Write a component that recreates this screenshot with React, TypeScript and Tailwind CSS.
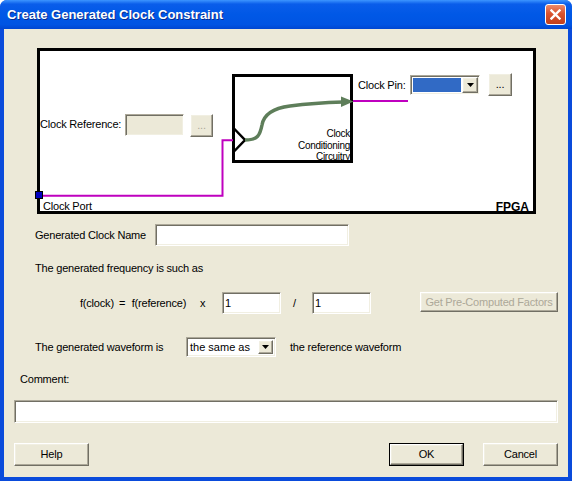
import React from 'react';

// XP-ish 3D borders
const sunken =
  'border border-t-[#ACA899] border-l-[#ACA899] border-b-white border-r-white shadow-[inset_1px_1px_0_#716F64,inset_-1px_-1px_0_#F1EFE2]';
const raised =
  'border border-t-white border-l-white border-b-[#716F64] border-r-[#716F64] shadow-[inset_-1px_-1px_0_#ACA899,inset_1px_1px_0_#F1EFE2] bg-[#ECE9D8]';

const DropArrow = () => (
  <svg width="7" height="4" viewBox="0 0 7 4">
    <polygon points="0,0 7,0 3.5,4" fill="#000" />
  </svg>
);

const Diagram = () => (
  <div className="ml-[33px] mt-[19px] w-[499px] h-[166px] border-[3px] border-black bg-white relative">
    {/* clock conditioning block */}
    <div className="absolute left-[192px] top-[23px] w-[121px] h-[89px] border-[3px] border-black">
      <div className="absolute right-0 top-[51px] text-right text-[10px] leading-[11.5px] tracking-[-0.3px]">
        Clock
        <br />
        Conditioning
        <br />
        Circuitry
      </div>
    </div>

    <svg className="absolute inset-0 overflow-visible" width="493" height="160">
      <polyline
        points="3,144.8 182.5,144.8 182.5,89.2 193,89.2"
        fill="none"
        stroke="#BF00BF"
        strokeWidth="2"
      />
      <line x1="313" y1="50" x2="368" y2="50" stroke="#BF00BF" strokeWidth="2" />
      <polyline points="193,76.5 205,89 193,101.5" fill="none" stroke="#000" strokeWidth="2.5" />
      <path
        d="M205 89 C218 89 220 84 222 74 C224 62 235 57 250 55 C265 53 285 51.5 303 51"
        fill="none"
        stroke="#5E7E5A"
        strokeWidth="3.5"
      />
      <polygon points="301,45.5 313.5,50.5 301,56" fill="#5E7E5A" />
    </svg>

    {/* clock port */}
    <div className="absolute left-[-5px] top-[140px] w-[8px] h-[8px] bg-[#0000C0] border border-black" />
    <span className="absolute left-[3px] top-[148px] leading-[14px]">Clock Port</span>

    {/* clock reference */}
    <span className="absolute left-0 top-[66px] leading-[14px]">Clock Reference:</span>
    <div className={`absolute left-[85px] top-[63px] w-[59px] h-[22px] bg-[#ECE9D8] ${sunken}`} />
    <div
      className={`absolute left-[150px] top-[63px] w-[23px] h-[23px] flex items-center justify-center text-[#ACA899] ${raised}`}
    >
      ...
    </div>

    {/* clock pin */}
    <span className="absolute left-[318px] top-[27px] leading-[14px]">Clock Pin:</span>
    <div className={`absolute left-[370px] top-[24px] w-[70px] h-[20px] bg-white p-[1px] flex ${sunken}`}>
      <div className="flex-1 m-[1px] bg-[#316AC5]" />
      <div className={`w-[16px] flex items-center justify-center ${raised}`}>
        <DropArrow />
      </div>
    </div>
    <div
      className={`absolute left-[448px] top-[22px] w-[24px] h-[23px] flex items-center justify-center ${raised}`}
    >
      ...
    </div>

    <span className="absolute right-[4px] top-[149px] text-[12px] font-bold leading-[14px] tracking-normal">
      FPGA
    </span>
  </div>
);

export default function App() {
  return (
    <div className="w-[572px] h-[481px] bg-[#0A4BDB] rounded-t-[7px] flex flex-col overflow-hidden font-['Liberation_Sans',Arial,sans-serif] text-[11px] text-black tracking-[-0.2px]">
      {/* title bar */}
      <div className="h-[29px] shrink-0 flex items-center pl-[7px] pr-[6px] bg-[linear-gradient(to_bottom,#3D95FF_0%,#0A5DEA_14%,#0058E6_50%,#0054E3_85%,#0046D1_100%)]">
        <span className="text-white font-bold text-[13px] tracking-normal [text-shadow:1px_1px_0_#0A2C8C]">
          Create Generated Clock Constraint
        </span>
        <div className="ml-auto w-[21px] h-[21px] rounded-[3px] border border-white bg-[linear-gradient(to_bottom,#EC8A6C,#D9532F_45%,#C23F1C)] flex items-center justify-center">
          <svg width="11" height="11" viewBox="0 0 11 11">
            <path d="M1.5 1.5 L9.5 9.5 M9.5 1.5 L1.5 9.5" stroke="#fff" strokeWidth="2.4" strokeLinecap="square" />
          </svg>
        </div>
      </div>

      {/* client area */}
      <div className="flex-1 mx-[4px] mb-[4px] bg-[#ECE9D8] flex flex-col">
        <Diagram />

        <div className="mt-[10px] h-[22px] flex items-center pl-[31px]">
          <span className="w-[120px]">Generated Clock Name</span>
          <div className={`w-[194px] h-[22px] bg-white ${sunken}`} />
        </div>

        <div className="mt-[15px] h-[14px] flex items-center pl-[31px]">The generated frequency is such as</div>

        <div className="mt-[17px] h-[22px] flex items-start pl-[76px]">
          <div className="w-[142px] h-[22px] flex items-center">
            <span className="w-[39px]">f(clock)</span>
            <span className="w-[12.7px]">=</span>
            <span className="w-[68.3px]">f(reference)</span>
            <span className="w-[22px]">x</span>
          </div>
          <div className={`w-[59px] h-[22px] bg-white flex items-center pl-[2px] ${sunken}`}>1</div>
          <div className="w-[31px] h-[22px] flex items-center pl-[12px]">/</div>
          <div className={`w-[59px] h-[22px] bg-white flex items-center pl-[2px] ${sunken}`}>1</div>
          <div
            className={`ml-[49px] w-[138px] h-[20px] flex items-center justify-center text-[#ACA899] ${raised}`}
          >
            Get Pre-Computed Factors
          </div>
        </div>

        <div className="mt-[23px] h-[20px] flex items-center pl-[31px]">
          <span className="w-[151px]">The generated waveform is</span>
          <div className={`w-[90px] h-[20px] bg-white p-[1px] flex ${sunken}`}>
            <span className="flex-1 flex items-center pl-[2px] tracking-normal">the same as</span>
            <div className={`w-[15px] m-[1px] ml-0 flex items-center justify-center ${raised}`}>
              <DropArrow />
            </div>
          </div>
          <span className="ml-[14px]">the reference waveform</span>
        </div>

        <div className="mt-[15px] h-[14px] flex items-center pl-[16px]">Comment:</div>

        <div className={`mt-[14px] ml-[10px] w-[544px] h-[23px] bg-white ${sunken}`} />

        <div className="mt-[20px] h-[23px] flex pl-[10px]">
          <div className={`w-[75px] h-[23px] flex items-center justify-center ${raised}`}>Help</div>
          <div className="ml-[300px] w-[75px] h-[23px] border border-black flex">
            <div className={`flex-1 flex items-center justify-center ${raised}`}>OK</div>
          </div>
          <div className={`ml-[19px] w-[75px] h-[23px] flex items-center justify-center ${raised}`}>Cancel</div>
        </div>
      </div>
    </div>
  );
}
